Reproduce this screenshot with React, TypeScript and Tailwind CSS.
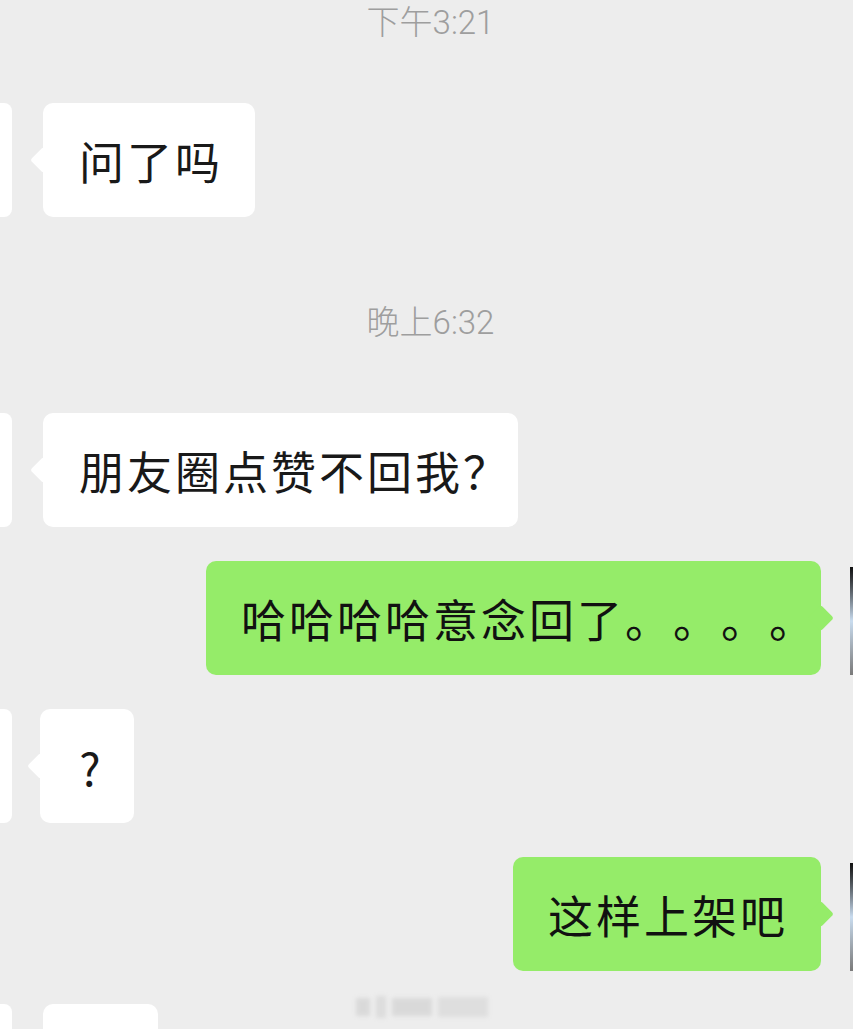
import type { ReactNode } from "react";

const cjk = "font-['Noto_Sans_CJK_SC','Noto_Sans',sans-serif] [text-spacing-trim:space-all] [font-feature-settings:'chws'_0]";

function TimeLabel({ text }: { text: string }) {
  return (
    <div className="flex h-[44px] items-center justify-center pl-[8px]">
      <span className="font-['Roboto','Noto_Sans_CJK_SC',sans-serif] text-[33px] leading-none font-light text-[#9e9e9e]">
        {text}
      </span>
    </div>
  );
}

function LeftMessage({ children, className = "", width }: { children?: ReactNode; className?: string; width: string }) {
  return (
    <div className={`flex items-start ${className}`}>
      <div className="h-[114px] w-[12px] shrink-0 rounded-r-[8px] bg-white" />
      <div className={`relative ml-[31px] flex h-[114px] items-center rounded-[10px] bg-white pl-[36px] text-[#191919] ${width}`}>
        <div className="absolute top-1/2 left-[-9px] h-[19px] w-[19px] -translate-y-1/2 rotate-45 rounded-[3px] bg-white" />
        {children ? (
          <span className={`${cjk} relative text-[45px] leading-none tracking-[3px] whitespace-nowrap`}>{children}</span>
        ) : null}
      </div>
    </div>
  );
}

function RightMessage({ children, className = "", width }: { children: ReactNode; className?: string; width: string }) {
  return (
    <div className={`flex h-[114px] items-start justify-end ${className}`}>
      <div className={`relative flex h-[114px] items-center rounded-[10px] bg-[#95ec69] pl-[35px] text-[#111] ${width}`}>
        <div className="absolute top-1/2 right-[-9px] h-[19px] w-[19px] -translate-y-1/2 rotate-45 rounded-[3px] bg-[#95ec69]" />
        <span className={`${cjk} relative text-[45px] leading-none tracking-[3px] whitespace-nowrap`}>{children}</span>
      </div>
      <div className="mt-[6px] ml-[29px] h-[108px] w-[3px] shrink-0 bg-gradient-to-b from-[#111] via-[#c9dcef] to-[#7a7a7a]" />
    </div>
  );
}

export default function App() {
  return (
    <div className="relative h-[1029px] w-[853px] overflow-hidden bg-[#ededed]">
      <TimeLabel text="下午3:21" />
      <LeftMessage className="mt-[59px]" width="w-[212px]">问了吗</LeftMessage>

      <div className="mt-[83px]">
        <TimeLabel text="晚上6:32" />
      </div>
      <LeftMessage className="mt-[69px]" width="w-[475px]">朋友圈点赞不回我？</LeftMessage>

      <RightMessage className="mt-[34px]" width="w-[615px]">哈哈哈哈意念回了。。。。</RightMessage>

      <div className="mt-[34px] flex items-start">
        <div className="h-[114px] w-[12px] shrink-0 rounded-r-[8px] bg-white" />
        <div className="relative ml-[28px] flex h-[114px] w-[94px] items-center justify-center rounded-[10px] bg-white text-[#191919]">
          <div className="absolute top-1/2 left-[-9px] h-[19px] w-[19px] -translate-y-1/2 rotate-45 rounded-[3px] bg-white" />
          <span className={`${cjk} relative pl-[6px] text-[45px] leading-none`}>?</span>
        </div>
      </div>

      <RightMessage className="mt-[34px]" width="w-[308px]">这样上架吧</RightMessage>

      <LeftMessage className="mt-[33px]" width="w-[115px]" />

      <div className="absolute top-[994px] left-[356px] flex h-[26px] w-[145px] items-center gap-[6px] opacity-40 blur-[2px]">
        <span className="h-[18px] w-[14px] bg-[#bdbdbd]" />
        <span className="h-[22px] w-[10px] bg-[#c4c4c4]" />
        <span className="h-[18px] w-[40px] bg-[#bdbdbd]" />
        <span className="h-[20px] w-[50px] bg-[#c8c8c8]" />
      </div>
    </div>
  );
}
